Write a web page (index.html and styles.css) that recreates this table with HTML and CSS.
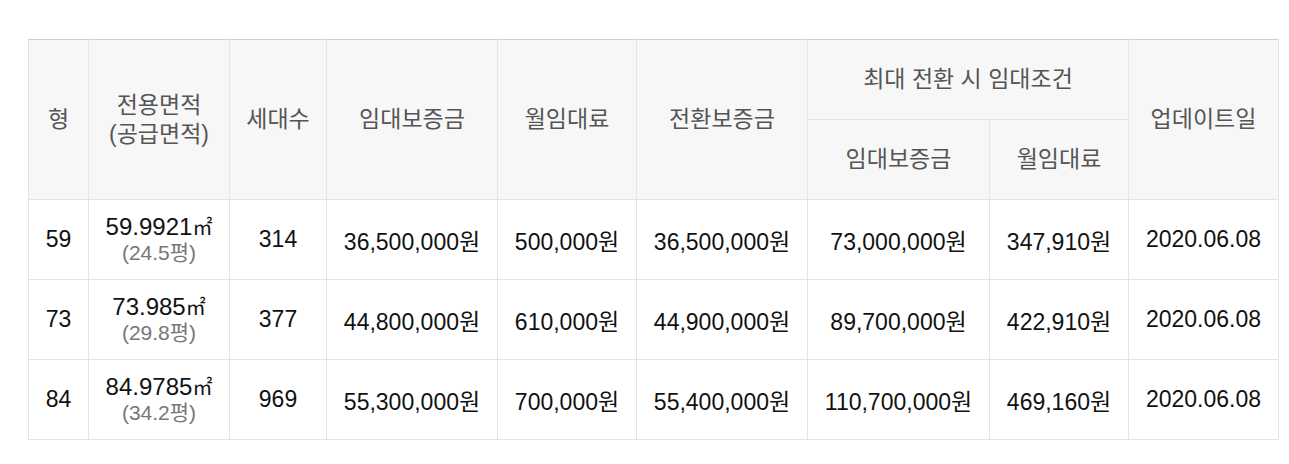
FILE: index.html
```html
<!DOCTYPE html>
<html lang="ko">
<head>
<meta charset="utf-8">
<link rel="stylesheet" href="styles.css">
</head>
<body>
<div class="wrap">
<table class="rent">
  <colgroup>
    <col class="c1"><col class="c2"><col class="c3"><col class="c4"><col class="c5"><col class="c6"><col class="c7"><col class="c8"><col class="c9">
  </colgroup>
  <thead>
    <tr class="h1">
      <th rowspan="2">형</th>
      <th rowspan="2">전용면적<br>(공급면적)</th>
      <th rowspan="2">세대수</th>
      <th rowspan="2">임대보증금</th>
      <th rowspan="2">월임대료</th>
      <th rowspan="2">전환보증금</th>
      <th colspan="2">최대 전환 시 임대조건</th>
      <th rowspan="2">업데이트일</th>
    </tr>
    <tr class="h2">
      <th>임대보증금</th>
      <th>월임대료</th>
    </tr>
  </thead>
  <tbody>
    <tr>
      <td>59</td>
      <td><span class="area">59.9921<span class="unit">㎡</span></span><span class="py">(24.5평)</span></td>
      <td>314</td>
      <td>36,500,000원</td>
      <td>500,000원</td>
      <td>36,500,000원</td>
      <td>73,000,000원</td>
      <td>347,910원</td>
      <td>2020.06.08</td>
    </tr>
    <tr>
      <td>73</td>
      <td><span class="area">73.985<span class="unit">㎡</span></span><span class="py">(29.8평)</span></td>
      <td>377</td>
      <td>44,800,000원</td>
      <td>610,000원</td>
      <td>44,900,000원</td>
      <td>89,700,000원</td>
      <td>422,910원</td>
      <td>2020.06.08</td>
    </tr>
    <tr>
      <td>84</td>
      <td><span class="area">84.9785<span class="unit">㎡</span></span><span class="py">(34.2평)</span></td>
      <td>969</td>
      <td>55,300,000원</td>
      <td>700,000원</td>
      <td>55,400,000원</td>
      <td>110,700,000원</td>
      <td>469,160원</td>
      <td>2020.06.08</td>
    </tr>
  </tbody>
</table>
</div>
</body>
</html>
```
FILE: styles.css
```css
html, body {
  margin: 0;
  padding: 0;
  background: #fff;
}
.wrap {
  padding: 39px 0 0 28px;
}
.rent {
  border-collapse: collapse;
  table-layout: fixed;
  width: 1250px;
  font-family: "Liberation Sans", "Noto Sans CJK KR", sans-serif;
  font-size: 23px;
  color: #111;
  border-top: 1px solid #cfcfcf;
}
.c1 { width: 60px; }
.c2 { width: 141px; }
.c3 { width: 97px; }
.c4 { width: 171px; }
.c5 { width: 139px; }
.c6 { width: 171px; }
.c7 { width: 182px; }
.c8 { width: 139px; }
.c9 { width: 150px; }
.rent th, .rent td {
  border: 1px solid #e4e4e4;
  text-align: center;
  vertical-align: middle;
  padding: 0;
}
.rent th {
  background: #f7f7f7;
  color: #555;
  font-weight: normal;
  font-size: 23px;
  line-height: 29px;
}
.rent thead tr.h1 th { border-top: 1px solid #cfcfcf; }
.h1 { height: 80px; }
.h2 { height: 80px; }
.rent tbody tr { height: 80px; }
.area {
  display: block;
  font-size: 24px;
  line-height: 27px;
  color: #111;
}
.unit {
  font-size: 20px;
  line-height: 1;
}
.py {
  display: block;
  line-height: 26px;
  font-size: 21px;
  color: #777;
}
```
